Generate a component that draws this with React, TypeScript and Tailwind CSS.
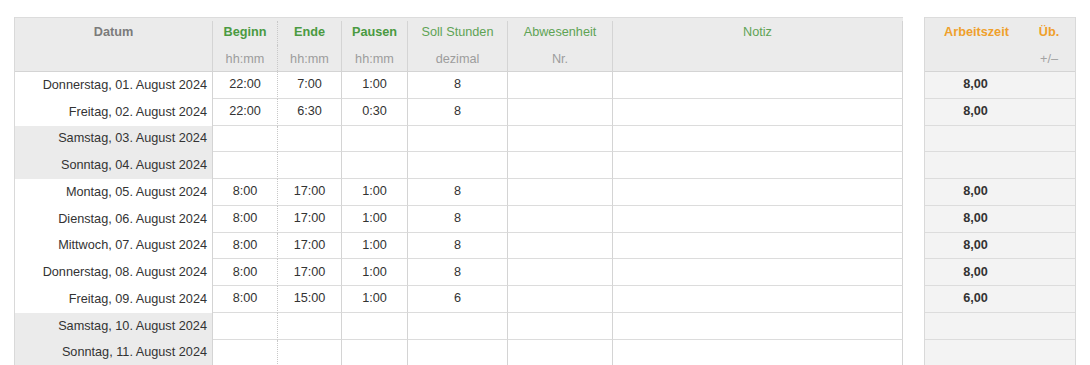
import type { ReactNode } from "react";

type Day = {
  label: string;
  weekend?: boolean;
  start?: string;
  end?: string;
  pause?: string;
  soll?: string;
  total?: string;
};

const days: Day[] = [
  { label: "Donnerstag, 01. August 2024", start: "22:00", end: "7:00", pause: "1:00", soll: "8", total: "8,00" },
  { label: "Freitag, 02. August 2024", start: "22:00", end: "6:30", pause: "0:30", soll: "8", total: "8,00" },
  { label: "Samstag, 03. August 2024", weekend: true },
  { label: "Sonntag, 04. August 2024", weekend: true },
  { label: "Montag, 05. August 2024", start: "8:00", end: "17:00", pause: "1:00", soll: "8", total: "8,00" },
  { label: "Dienstag, 06. August 2024", start: "8:00", end: "17:00", pause: "1:00", soll: "8", total: "8,00" },
  { label: "Mittwoch, 07. August 2024", start: "8:00", end: "17:00", pause: "1:00", soll: "8", total: "8,00" },
  { label: "Donnerstag, 08. August 2024", start: "8:00", end: "17:00", pause: "1:00", soll: "8", total: "8,00" },
  { label: "Freitag, 09. August 2024", start: "8:00", end: "15:00", pause: "1:00", soll: "6", total: "6,00" },
  { label: "Samstag, 10. August 2024", weekend: true },
  { label: "Sonntag, 11. August 2024", weekend: true },
];

const leftCols = "grid grid-cols-[198px_65px_64px_66px_100px_105px_290px]";
const rightCols = "grid grid-cols-[103px_48px]";

function Cell({ children, className = "" }: { children?: ReactNode; className?: string }) {
  return <div className={`flex items-center justify-center ${className}`}>{children}</div>;
}

export default function App() {
  return (
    <div className="flex h-[365px] w-[1090px] gap-[21px] overflow-hidden bg-white pl-[14px] pt-[17px] font-['Liberation_Sans',Arial,sans-serif] text-[12.7px] text-[#333333]">
      <div className="w-[889px] border-l border-[#d9d9d9]">
        <div className={`${leftCols} h-[28px] border-t border-[#dcdcdc] bg-[#ebebeb] pt-[3px]`}>
          <Cell className="border-r border-[#d4d4d4] font-bold text-[#7b7b7b]">Datum</Cell>
          <Cell className="border-r border-dotted border-[#c8c8c8] font-bold text-[#4a9a41]">Beginn</Cell>
          <Cell className="border-r border-[#d4d4d4] font-bold text-[#4a9a41]">Ende</Cell>
          <Cell className="border-r border-[#d4d4d4] font-bold text-[#4a9a41]">Pausen</Cell>
          <Cell className="border-r border-[#d4d4d4] text-[#5ea355]">Soll Stunden</Cell>
          <Cell className="border-r border-[#d4d4d4] text-[#5ea355]">Abwesenheit</Cell>
          <Cell className="border-r border-[#d4d4d4] text-[#5ea355]">Notiz</Cell>
        </div>
        <div className={`${leftCols} h-[27px] border-b border-[#d4d4d4] bg-[#ebebeb] text-[#9d9d9d]`}>
          <Cell className="border-r border-[#d4d4d4]" />
          <Cell className="border-r border-dotted border-[#c8c8c8] pt-[3px]">hh:mm</Cell>
          <Cell className="border-r border-[#d4d4d4] pt-[3px]">hh:mm</Cell>
          <Cell className="border-r border-[#d4d4d4] pt-[3px]">hh:mm</Cell>
          <Cell className="border-r border-[#d4d4d4] pt-[3px]">dezimal</Cell>
          <Cell className="border-r border-[#d4d4d4] pt-[3px]">Nr.</Cell>
          <Cell className="border-r border-[#d4d4d4]" />
        </div>
        {days.map((d) => (
          <div className={`${leftCols} h-[26.75px]`} key={d.label}>
            <div
              className={`flex items-center justify-end border-r border-[#d4d4d4] pr-[5px] ${d.weekend ? "bg-[#ebebeb]" : "bg-white"}`}
            >
              {d.label}
            </div>
            <Cell className="border-b border-r border-b-[#dcdcdc] border-r-[#c8c8c8] [border-right-style:dotted]">{d.start}</Cell>
            <Cell className="border-b border-r border-b-[#dcdcdc] border-r-[#d4d4d4]">{d.end}</Cell>
            <Cell className="border-b border-r border-b-[#dcdcdc] border-r-[#d4d4d4]">{d.pause}</Cell>
            <Cell className="border-b border-r border-b-[#dcdcdc] border-r-[#d4d4d4]">{d.soll}</Cell>
            <Cell className="border-b border-r border-b-[#dcdcdc] border-r-[#d4d4d4]" />
            <Cell className="border-b border-r border-b-[#dcdcdc] border-r-[#d4d4d4]" />
          </div>
        ))}
      </div>

      <div className="w-[152px] border-x border-[#d9d9d9]">
        <div className={`${rightCols} h-[28px] border-t border-[#dcdcdc] bg-[#ebebeb] pt-[3px] font-bold text-[#efa02c]`}>
          <Cell>Arbeitszeit</Cell>
          <Cell className="pr-[6px]">Üb.</Cell>
        </div>
        <div className={`${rightCols} h-[27px] border-b border-[#d4d4d4] bg-[#ebebeb] pt-[3px] text-[#a3a3a3]`}>
          <Cell />
          <Cell className="pr-[6px]">+/–</Cell>
        </div>
        {days.map((d) => (
          <div className={`${rightCols} h-[26.75px] border-b border-[#dcdcdc] bg-[#f3f3f3]`} key={d.label}>
            <Cell className="pr-[2px] font-bold">{d.total}</Cell>
            <Cell />
          </div>
        ))}
      </div>
    </div>
  );
}
